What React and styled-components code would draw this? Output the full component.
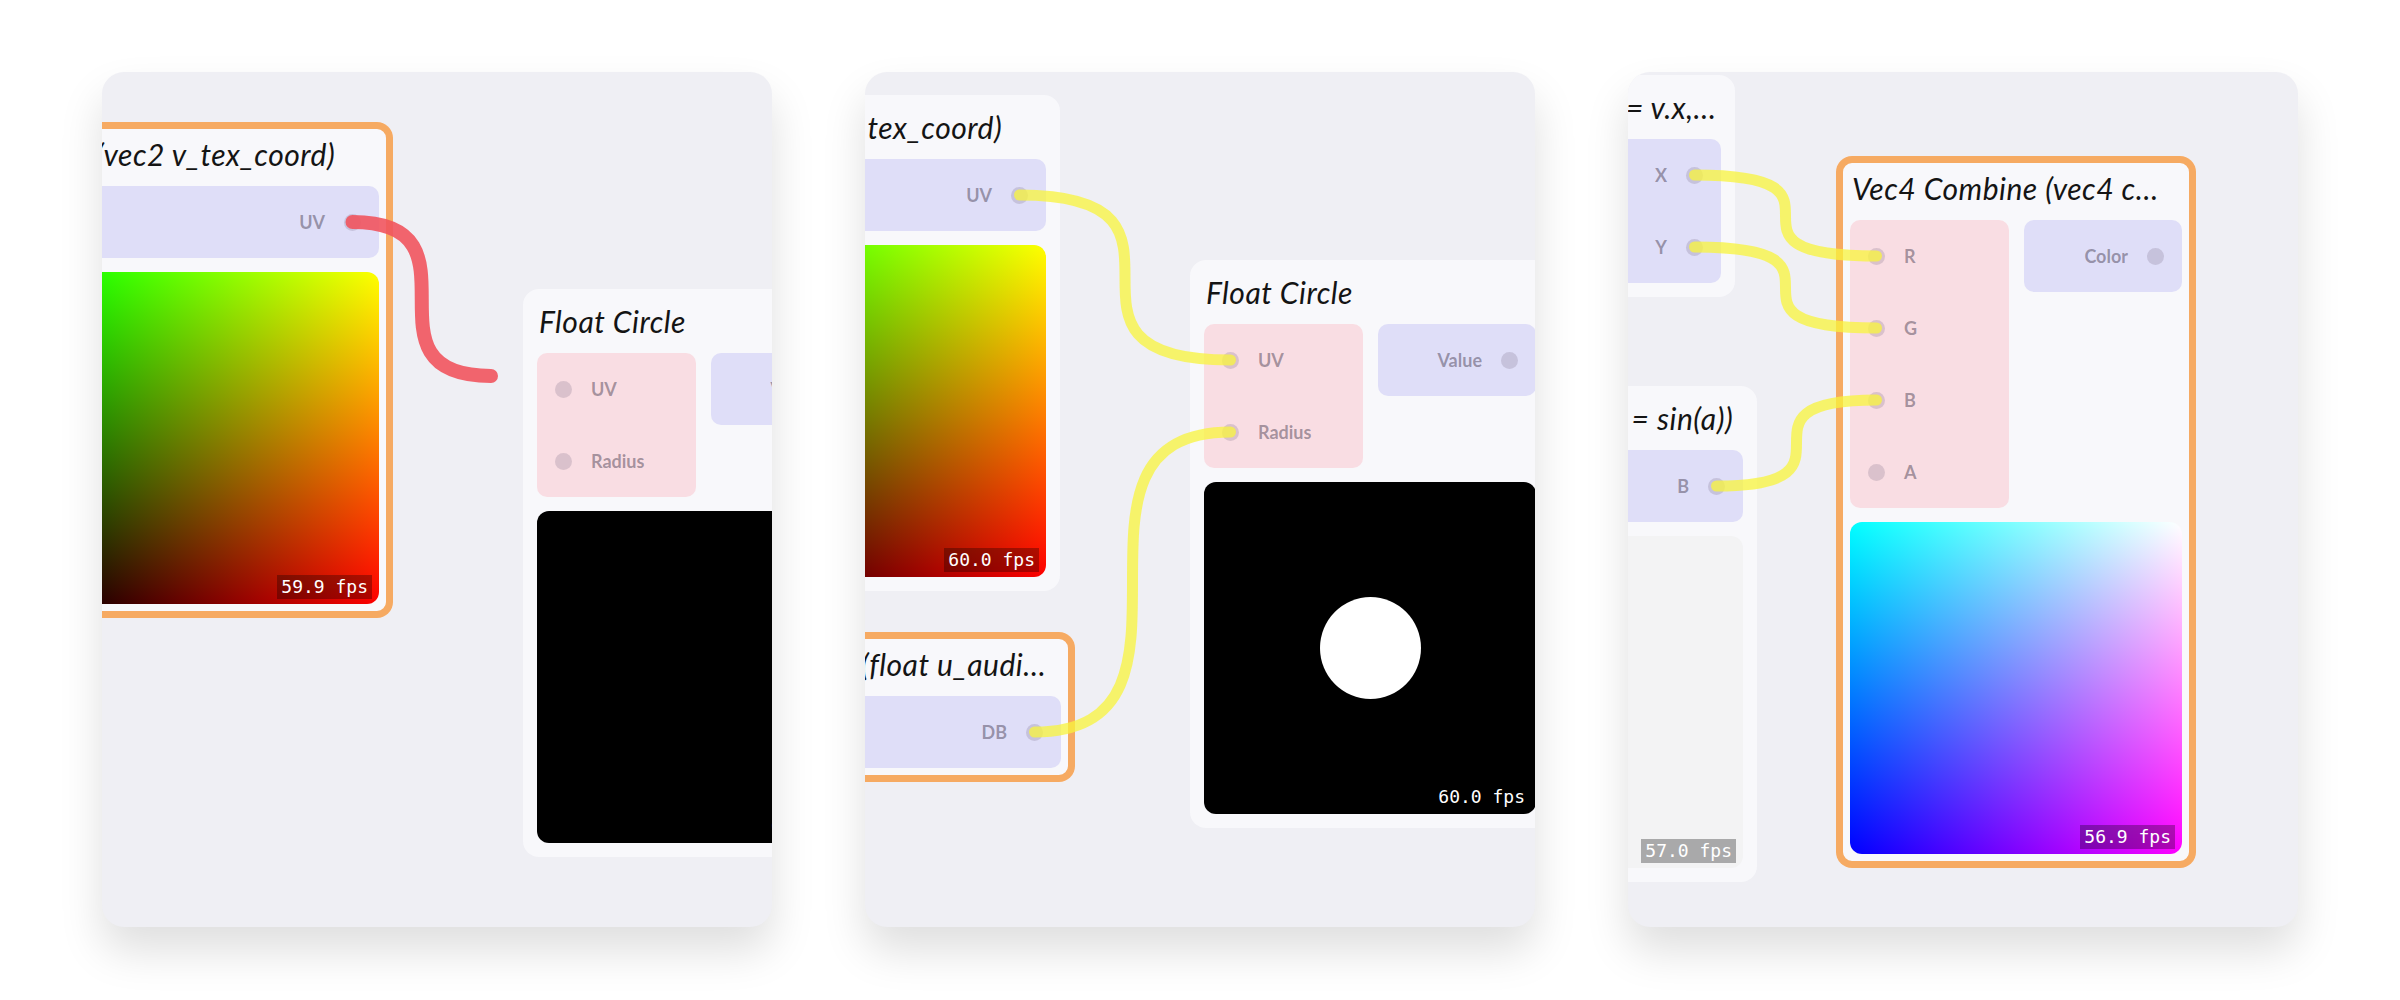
import React from "react";
import styled, { createGlobalStyle } from "styled-components";

const NODE_W = 360;
const PAD = 14;
const TITLE_H = 64;
const ROW_H = 72;
const PORT_INSET = 18 + 8.5;

const GlobalStyle = createGlobalStyle`
  html, body { margin: 0; padding: 0; background: #ffffff; }
  body { font-family: "Lato", "Open Sans", sans-serif; }
`;

const Page = styled.main`
  display: flex;
  justify-content: center;
  align-items: flex-start;
  gap: 93px;
  padding-top: 72px;
  height: 1000px;
  box-sizing: border-box;
`;

const Panel = styled.section`
  position: relative;
  flex: none;
  width: 670px;
  height: 855px;
  border-radius: 22px;
  background: #efeff4;
  overflow: hidden;
  box-shadow: 0 24px 44px rgba(0, 0, 0, 0.13);
`;

const NodeBox = styled.div`
  position: absolute;
  left: ${(p) => p.$x}px;
  top: ${(p) => p.$y}px;
  width: ${NODE_W}px;
  box-sizing: border-box;
  padding: 0 ${PAD}px ${PAD}px;
  border-radius: 16px;
  background: #f8f8fb;
  box-shadow: ${(p) => (p.$selected ? "inset 0 0 0 7px #f6aa62" : "none")};
  display: flex;
  flex-direction: column;
`;

const Title = styled.div`
  height: ${TITLE_H}px;
  line-height: ${TITLE_H}px;
  padding-left: 2px;
  font-family: "Lato", "Open Sans", sans-serif;
  font-style: italic;
  font-weight: 400;
  font-size: 30px;
  letter-spacing: 0.5px;
  color: #141414;
  white-space: nowrap;
`;

const Ports = styled.div`
  display: flex;
  align-items: flex-start;
  gap: 15px;
`;

const Group = styled.div`
  flex: 1;
  display: flex;
  flex-direction: column;
  border-radius: 10px;
  background: ${(p) => (p.$kind === "in" ? "#f9dde3" : "#dfdef8")};
`;

const PortRow = styled.div`
  height: ${ROW_H}px;
  display: flex;
  flex-direction: ${(p) => (p.$out ? "row-reverse" : "row")};
  align-items: center;
  gap: 19px;
  padding: 0 18px;
`;

const Dot = styled.span`
  flex: none;
  width: 17px;
  height: 17px;
  border-radius: 50%;
  background: rgba(110, 95, 125, 0.22);
`;

const PortLabel = styled.span`
  font-family: "Lato", "Open Sans", sans-serif;
  font-weight: 700;
  font-size: 18px;
  color: rgba(60, 50, 70, 0.46);
`;

const previewBg = {
  uv: `
    background-color: #000;
    background-image: linear-gradient(to right, #000, #f00), linear-gradient(to bottom, #0f0, #000);
    background-blend-mode: screen;
  `,
  rgb: `
    background-color: #00f;
    background-image: linear-gradient(to right, #000, #f00), linear-gradient(to bottom, #0f0, #000);
    background-blend-mode: screen;
  `,
  black: `background: #000;`,
  gray: `background: #f3f3f4;`,
};

const Preview = styled.div`
  position: relative;
  margin-top: 14px;
  aspect-ratio: 1 / 1;
  border-radius: 12px;
  overflow: hidden;
  display: flex;
  align-items: center;
  justify-content: center;
  ${(p) => previewBg[p.$kind]}
`;

const Disc = styled.div`
  width: 101px;
  height: 102px;
  border-radius: 50%;
  background: #ffffff;
`;

const Fps = styled.span`
  position: absolute;
  right: 7px;
  bottom: 5px;
  padding: 0 4px;
  font-family: "DejaVu Sans Mono", "Liberation Mono", monospace;
  font-size: 18px;
  line-height: 24px;
  color: #ffffff;
  background: rgba(0, 0, 0, 0.3);
`;

const Wires = styled.svg`
  position: absolute;
  left: 0;
  top: 0;
  width: 670px;
  height: 855px;
  pointer-events: none;
`;

const WIRE = {
  yellow: { stroke: "rgba(248, 244, 60, 0.75)", width: 11 },
  red: { stroke: "rgba(241, 84, 94, 0.9)", width: 14 },
};

function Node({ node }) {
  const ins = node.inputs || [];
  const outs = node.outputs || [];
  return (
    <NodeBox $x={node.x} $y={node.y} $selected={node.selected}>
      <Title>{node.title}</Title>
      <Ports>
        {ins.length > 0 && (
          <Group $kind="in">
            {ins.map((p) => (
              <PortRow key={p}>
                <Dot />
                <PortLabel>{p}</PortLabel>
              </PortRow>
            ))}
          </Group>
        )}
        {outs.length > 0 && (
          <Group $kind="out">
            {outs.map((p) => (
              <PortRow key={p} $out>
                <Dot />
                <PortLabel>{p}</PortLabel>
              </PortRow>
            ))}
          </Group>
        )}
      </Ports>
      {node.preview && (
        <Preview $kind={node.preview}>
          {node.disc && <Disc />}
          <Fps>{node.fps}</Fps>
        </Preview>
      )}
    </NodeBox>
  );
}

const outPort = (n, i) => [n.x + NODE_W - PAD - PORT_INSET, n.y + TITLE_H + ROW_H / 2 + ROW_H * i];
const inPort = (n, i) => [n.x + PAD + PORT_INSET, n.y + TITLE_H + ROW_H / 2 + ROW_H * i];

function wirePath([ax, ay], [bx, by]) {
  const k = Math.abs(bx - ax);
  return `M${ax} ${ay} C${ax + k} ${ay} ${bx - k} ${by} ${bx} ${by}`;
}

const texCoord = { title: "UV (vec2 v_tex_coord)", outputs: ["UV"], preview: "uv" };
const floatCircle = { title: "Float Circle", inputs: ["UV", "Radius"], outputs: ["Value"], preview: "black", fps: "60.0 fps" };

function buildPanels() {
  const a1 = { ...texCoord, x: -69, y: 50, selected: true, fps: "59.9 fps" };
  const fc1 = { ...floatCircle, x: 421, y: 217 };

  const a2 = { ...texCoord, x: -165, y: 23, fps: "60.0 fps" };
  const fc2 = { ...floatCircle, x: 325, y: 188, disc: true };
  const c2 = { title: "Audio Vol (float u_audi\u2026", outputs: ["DB"], x: -150, y: 560, selected: true };

  const d3 = { title: "Vec2 Split (float x = v.x,\u2026", outputs: ["X", "Y"], x: -253, y: 3 };
  const e3 = { title: "Sine Osc (float b = sin(a))", outputs: ["B"], preview: "gray", fps: "57.0 fps", x: -231, y: 314 };
  const f3 = {
    title: "Vec4 Combine (vec4 c\u2026",
    inputs: ["R", "G", "B", "A"],
    outputs: ["Color"],
    preview: "rgb",
    fps: "56.9 fps",
    x: 208,
    y: 84,
    selected: true,
  };

  return [
    { id: "p1", nodes: [a1, fc1], wires: [{ from: outPort(a1, 0), to: [389, 304], kind: "red" }] },
    {
      id: "p2",
      nodes: [a2, fc2, c2],
      wires: [
        { from: outPort(a2, 0), to: inPort(fc2, 0), kind: "yellow" },
        { from: outPort(c2, 0), to: inPort(fc2, 1), kind: "yellow" },
      ],
    },
    {
      id: "p3",
      nodes: [d3, e3, f3],
      wires: [
        { from: outPort(d3, 0), to: inPort(f3, 0), kind: "yellow" },
        { from: outPort(d3, 1), to: inPort(f3, 1), kind: "yellow" },
        { from: outPort(e3, 0), to: inPort(f3, 2), kind: "yellow" },
      ],
    },
  ];
}

export default function App() {
  const panels = buildPanels();
  return (
    <>
      <GlobalStyle />
      <Page>
        {panels.map((panel) => (
          <Panel key={panel.id}>
            {panel.nodes.map((n) => (
              <Node key={n.title + n.x} node={n} />
            ))}
            <Wires viewBox="0 0 670 855">
              {panel.wires.map((w, i) => (
                <path
                  key={i}
                  d={wirePath(w.from, w.to)}
                  fill="none"
                  stroke={WIRE[w.kind].stroke}
                  strokeWidth={WIRE[w.kind].width}
                  strokeLinecap="round"
                />
              ))}
            </Wires>
          </Panel>
        ))}
      </Page>
    </>
  );
}
